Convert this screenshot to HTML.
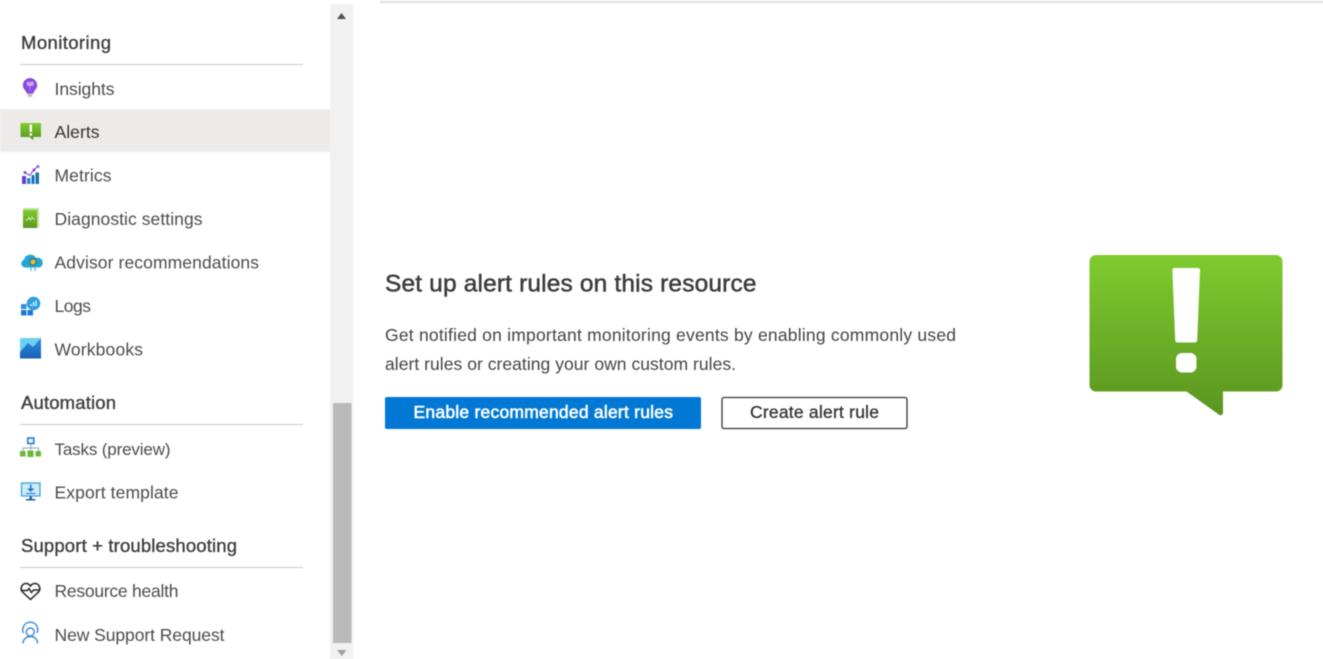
<!DOCTYPE html>
<html><head><meta charset="utf-8"><style>
html,body{margin:0;padding:0;background:#fff;overflow:hidden}
svg{display:block;filter:blur(.45px)}
text{font-family:"Liberation Sans",sans-serif;font-size:17.5px;fill:#4c4c4c}
.h{fill:#3c3c3c;stroke:#3c3c3c;stroke-width:.35px;font-size:18.500px}
.b{fill:#333}
</style></head><body>
<svg width="1323" height="659" viewBox="0 0 1323 659" xmlns="http://www.w3.org/2000/svg">
<defs>
<linearGradient id="g" x1="0" y1="0" x2="0" y2="1"><stop offset="0" stop-color="#7fcb2f"/><stop offset="1" stop-color="#5a9520"/></linearGradient>
<linearGradient id="wb" x1="0" y1="0" x2="0" y2="1"><stop offset="0" stop-color="#2a90dc"/><stop offset="1" stop-color="#1a60b8"/></linearGradient>
</defs>
<rect width="1323" height="659" fill="#fff"/>
<rect x="380" y="1" width="943" height="2" fill="#dcdcdc"/>

<rect x="0" y="109" width="330" height="43" fill="#edebe9"/>
<rect x="20" y="64" width="283" height="1" fill="#c8c6c4"/>
<rect x="20" y="424" width="283" height="1" fill="#c8c6c4"/>
<rect x="20" y="567" width="283" height="1" fill="#c8c6c4"/>

<text class="h" x="21" y="49" textLength="90" lengthAdjust="spacing">Monitoring</text>
<text x="54.500" y="95" textLength="60" lengthAdjust="spacing">Insights</text>
<text class="b" x="54.500" y="138" textLength="45" lengthAdjust="spacing">Alerts</text>
<text x="54.500" y="181.500" textLength="57" lengthAdjust="spacing">Metrics</text>
<text x="54.500" y="225" textLength="148" lengthAdjust="spacing">Diagnostic settings</text>
<text x="54.500" y="268.500" textLength="204.500" lengthAdjust="spacing">Advisor recommendations</text>
<text x="54.500" y="312" textLength="36.500" lengthAdjust="spacing">Logs</text>
<text x="54.500" y="355.500" textLength="88.500" lengthAdjust="spacing">Workbooks</text>
<text class="h" x="21" y="409" textLength="95" lengthAdjust="spacing">Automation</text>
<text x="54.500" y="455" style="font-size:17px" textLength="116" lengthAdjust="spacing">Tasks (preview)</text>
<text x="54.500" y="498.500" textLength="124" lengthAdjust="spacing">Export template</text>
<text class="h" x="21" y="552" textLength="216" lengthAdjust="spacing">Support + troubleshooting</text>
<text x="54.500" y="597" textLength="124" lengthAdjust="spacing">Resource health</text>
<text x="54.500" y="641" textLength="170" lengthAdjust="spacing">New Support Request</text>

<!-- Insights -->
<path d="M30 78a7.200 7.200 0 0 1 4.500 12.800l-1.300 2.700h-6.400l-1.300-2.700a7.200 7.200 0 0 1 4.500-12.800z" fill="#8a48e0"/>
<path d="M26.500 83.500q0-2 2-2t1.500 2q0-2 2-2t2 2q0 2-2 2.500h-4q-1.500-.5-1.500-2.500z" fill="#c9a4f2"/>
<path d="M30 86v5" stroke="#b48aec" stroke-width="1"/>
<rect x="27.500" y="93.500" width="5" height="3.500" rx="1" fill="#c4c0cc"/>
<!-- Alerts -->
<path d="M21 123h19.500q.5 0 .5.500v13q0 .5-.5.500h-7l-.500 3-3.500-3H21q-.5 0-.5-.5v-13q0-.5.500-.5z" fill="url(#g)"/>
<rect x="29.600" y="124.500" width="2.400" height="7.500" fill="#fff"/><rect x="29.600" y="133.300" width="2.400" height="2.400" fill="#fff"/>
<!-- Metrics -->
<path d="M25 172.500l4.500 3 5-6.500 3.500-2.500" fill="none" stroke="#9a5fd8" stroke-width="1.300"/>
<circle cx="25" cy="172.500" r="1.500" fill="#8a4fd0"/><circle cx="34" cy="170" r="1.500" fill="#8a4fd0"/><circle cx="38" cy="166.500" r="1.500" fill="#a060e0"/>
<rect x="22" y="176" width="4" height="8" fill="#6a40c8"/><rect x="27" y="178" width="3.500" height="6" fill="#1e8fd0"/><rect x="31.500" y="175" width="3" height="9" fill="#1a6fb8"/><rect x="35.500" y="172.500" width="3.500" height="11.500" fill="#1e6fa8"/>
<!-- Diagnostic -->
<rect x="23" y="208" width="16" height="20" rx="1" fill="#c4dfa0"/>
<rect x="23" y="210" width="14" height="18" fill="url(#g)"/>
<path d="M25.500 220l2.500-.5 1-2 1.500 2.500 1.500-3 1 2h2" fill="none" stroke="#e8f5d0" stroke-width=".8"/>
<!-- Advisor -->
<path d="M25 267.500a4 4 0 0 1-1-7.800a6.500 6.500 0 0 1 12-1.700a5 5 0 0 1 3.500 9.500z" fill="#26a5d8"/>
<circle cx="33" cy="262" r="4" fill="#2a7f90"/><circle cx="33" cy="262" r="2.500" fill="#f0c020"/>
<path d="M31 267v4M35 267v4" stroke="#50c8d8" stroke-width="1.500"/>
<!-- Logs -->
<rect x="21" y="304" width="5.500" height="5" fill="#2f8fe0"/><rect x="21" y="310" width="5.500" height="5.500" fill="#1f78d0"/><rect x="27.500" y="310" width="5.500" height="5.500" fill="#1f78d0"/>
<circle cx="33.500" cy="303.500" r="6.800" fill="#2aa0dc"/>
<path d="M31 306v-2M33.500 306v-4M36 306v-5.500" stroke="#fff" stroke-width="1.200"/>
<!-- Workbooks -->
<rect x="20" y="338" width="21" height="20.500" rx="1" fill="#6fd0f5"/>
<path d="M20 352l8-9 5 4 8-9v20.500h-21z" fill="url(#wb)"/>
<!-- Tasks -->
<rect x="27.800" y="438" width="6" height="5.500" fill="#e8f4ff" stroke="#1f78d0" stroke-width="1.500"/>
<path d="M30.800 444v6M23 451v-3h15.500v3" fill="none" stroke="#8aa8c0" stroke-width="1"/>
<rect x="20" y="451" width="5.500" height="5.500" fill="#6cb83a"/><rect x="27.500" y="450.500" width="6" height="6.500" fill="#6cb83a"/><rect x="35.500" y="451" width="5.500" height="5.500" fill="#6cb83a"/>
<!-- Export -->
<rect x="21.500" y="483" width="18.500" height="13" fill="#cfeafa" stroke="#3fa3dc" stroke-width="1.300"/>
<path d="M30.700 484.500v5" stroke="#1f78d0" stroke-width="1.500"/><path d="M27 488.500h7.500l-3.800 3.500z" fill="#1f78d0"/><rect x="26" y="493" width="9.500" height="1" fill="#1f78d0"/>
<rect x="29.500" y="496.500" width="2.500" height="3" fill="#1d5f9c"/><rect x="26" y="499" width="9.500" height="1.500" fill="#1d5f9c"/>
<!-- Resource health -->
<path d="M30.500 599.500l-8-7.500c-3-3.500-.5-8.500 3.500-8.500c2 0 3.500 1 4.500 2.500c1-1.500 2.500-2.500 4.500-2.500c4 0 6.500 5 3.500 8.500z" fill="none" stroke="#222" stroke-width="1.500"/>
<path d="M21.500 590.500h6l1.500-2 2.500 4 2-2.500h6" fill="none" stroke="#222" stroke-width="1.400"/>
<!-- Support -->
<path d="M23.500 633a7.500 7.500 0 1 1 13.500 0" fill="none" stroke="#3f86d8" stroke-width="1.400"/>
<circle cx="30.300" cy="632" r="4" fill="none" stroke="#3f86d8" stroke-width="1.400"/>
<path d="M23 643.500c0-4 3-7 7.300-7s7.300 3 7.300 7" fill="none" stroke="#3f86d8" stroke-width="1.400"/>

<!-- Scrollbar -->
<rect x="330" y="4" width="23" height="655" fill="#f1f1f1"/>
<rect x="333" y="403" width="18.500" height="240" fill="#bababa"/>
<path d="M341.500 13l4.500 6h-9z" fill="#505050"/>
<path d="M337 650h9.500l-4.700 6z" fill="#a0a0a0"/>

<!-- Main -->
<text class="h" x="385" y="291.500" style="font-size:24.500px;stroke-width:.5px" textLength="371.500" lengthAdjust="spacing">Set up alert rules on this resource</text>
<text x="385" y="341" style="fill:#444" textLength="571" lengthAdjust="spacing">Get notified on important monitoring events by enabling commonly used</text>
<text x="385" y="370" style="fill:#444" textLength="351" lengthAdjust="spacing">alert rules or creating your own custom rules.</text>
<rect x="385" y="397" width="316" height="32" rx="2" fill="#0078d4"/>
<text x="413.500" y="418" style="fill:#fff;stroke:#fff;stroke-width:.6px" textLength="259.500" lengthAdjust="spacing">Enable recommended alert rules</text>
<rect x="722" y="397.500" width="185" height="31" rx="2" fill="#fff" stroke="#333" stroke-width="1.300"/>
<text x="750" y="418" style="fill:#333;stroke:#333;stroke-width:.3px" textLength="129" lengthAdjust="spacing">Create alert rule</text>

<!-- Big alert icon -->
<path d="M1096 255h180a6.500 6.500 0 0 1 6.500 6.500v123.500a6.500 6.500 0 0 1-6.500 6.500h-53v21q0 3.500-3.500 2.500l-33-23.500h-90.500a6.500 6.500 0 0 1-6.500-6.500v-123.500a6.500 6.500 0 0 1 6.500-6.500z" fill="url(#g)"/>
<path d="M1175 268h22.500q2.500 0 2.500 2.500l-2.800 69.500q-.1 2.500-2.500 2.500h-17q-2.400 0-2.500-2.500l-2.800-69.500q0-2.500 2.500-2.500z" fill="#fff"/>
<rect x="1176" y="353" width="20.500" height="19.500" rx="6" fill="#fff"/>
</svg>
</body></html>
